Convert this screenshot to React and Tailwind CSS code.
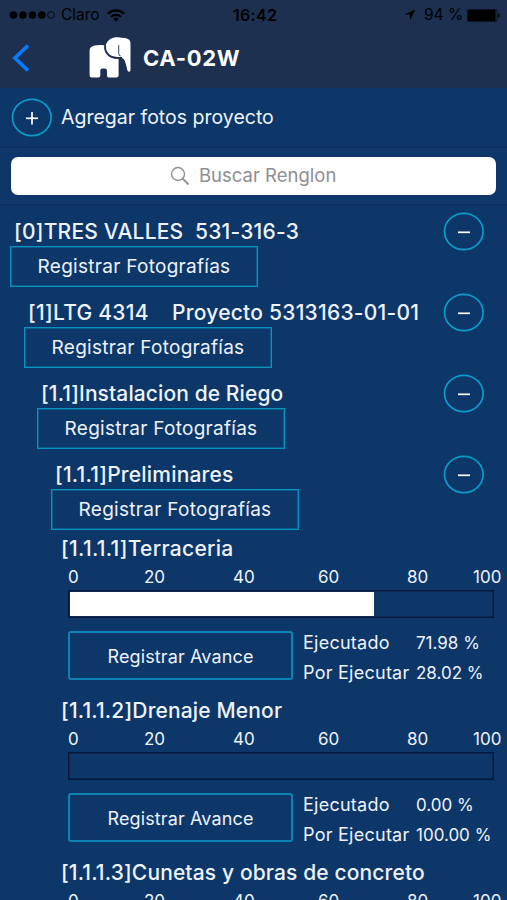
const sections = [
  { title: "[0]TRES VALLES  531-316-3", indent: "pl-[10px]", track: "tracking-[0.21px]" },
  { title: "[1]LTG 4314    Proyecto 5313163-01-01", indent: "pl-[24px]", track: "tracking-[0.24px]" },
  { title: "[1.1]Instalacion de Riego", indent: "pl-[37px]", track: "tracking-[0.1px]" },
  { title: "[1.1.1]Preliminares", indent: "pl-[51px]", track: "tracking-[0.2px]" },
];

const tasks = [
  { title: "[1.1.1.1]Terraceria", done: 71.98, track: "tracking-[0.3px]" },
  { title: "[1.1.1.2]Drenaje Menor", done: 0, track: "tracking-[0.15px]" },
  { title: "[1.1.1.3]Cunetas y obras de concreto", done: 0, track: "tracking-[0.13px]" },
];

const ticks = [
  { label: "0", width: "w-[76px]" },
  { label: "20", width: "w-[89px]" },
  { label: "40", width: "w-[85px]" },
  { label: "60", width: "w-[89px]" },
  { label: "80", width: "w-[66px]" },
  { label: "100", width: "w-[34px]" },
];

function StatusBar() {
  return (
    <div className="flex h-[30px] items-center pl-[9px] pr-[6px] text-black">
      <div className="flex w-[224px] items-center">
        <svg width="46" height="10" viewBox="0 0 46 10">
          <circle cx="4.5" cy="5" r="3.8" />
          <circle cx="14" cy="5" r="3.8" />
          <circle cx="23.5" cy="5" r="3.8" />
          <circle cx="32.8" cy="5" r="3.8" />
          <circle cx="42" cy="5" r="3.4" fill="none" stroke="black" strokeWidth="0.8" />
        </svg>
        <span className="ml-[6px] w-[40px] text-[15.5px] leading-none">Claro</span>
        <svg className="ml-[6px]" width="18" height="13" viewBox="0 0 18 13" fill="none" stroke="black" strokeWidth="2.2">
          <path d="M1 4.6a11.4 11.4 0 0 1 16 0" />
          <path d="M4 7.8a7.2 7.2 0 0 1 10 0" />
          <path d="M9 12.6L6.2 9.9a4 4 0 0 1 5.6 0z" fill="black" stroke="none" />
        </svg>
      </div>
      <span className="w-[46px] text-[16px] font-semibold leading-none tracking-[0.3px]">16:42</span>
      <div className="ml-auto flex items-center">
        <svg width="12" height="12" viewBox="0 0 12 12">
          <path d="M11.5 0.5L0.5 5.6h5.4v5.6z" />
        </svg>
        <span className="ml-[8px] w-[40px] whitespace-nowrap text-[15.5px] leading-none">94 %</span>
        <svg className="ml-[3px]" width="34" height="13" viewBox="0 0 34 13">
          <rect x="0.5" y="0.5" width="29.5" height="12" rx="1.5" fill="none" stroke="black" strokeOpacity="0.6" />
          <rect x="1" y="1" width="27.5" height="11" rx="0.5" />
          <path d="M31.2 4c2 .8 2 4.2 0 5z" />
        </svg>
      </div>
    </div>
  );
}

function ElephantLogo() {
  return (
    <svg width="44" height="44" viewBox="0 0 44 44" fill="white">
      <path d="M16.5 9.4C10 8.5 5.500 9.500 3 11.200Q1.600 12.200 1.600 14.500V39.300Q1.600 41.600 3.800 41.600H10.300Q12.300 41.600 12.300 39.600V34.500Q12.300 32.400 14.500 32.400H16.800Q19 32.400 19 34.500V39.600Q19 41.600 21 41.600H28.500Q30.600 41.600 30.600 39.500V21.500C25 24 15.500 19.500 16.500 9.400Z" />
      <path d="M17.800 9C19.500 3 25.500.8 30 1.200L38 2.300Q42.500 3.200 42.500 7.500V34Q42.500 35.800 41 35.700Q39.700 35.500 39.300 34C37.500 26 36.700 22.500 33 21.600C26 23.500 16 18 17.800 9Z" />
      <path d="M17.300 9.500C16 17 22.500 22.800 31 21.900H34" fill="none" stroke="#1d3050" strokeWidth="1.800" />
      <path d="M30.700 9v8.500q0 2.500 2 2.500" fill="none" stroke="#1d3050" strokeWidth="0.9" />
    </svg>
  );
}

function Header() {
  return (
    <header className="h-[88px] bg-[#1d3050]">
      <StatusBar />
      <div className="flex h-[57px] items-center pl-[11px]">
        <svg className="mb-[2px]" width="20" height="30" viewBox="0 0 20 30" fill="none">
          <path d="M17 2.5L4 15l13 12.5" stroke="#087cf8" strokeWidth="3.8" />
        </svg>
        <div className="mb-[2px] ml-[57px]">
          <ElephantLogo />
        </div>
        <h1 className="mb-[1px] ml-[11px] text-[22px] font-bold leading-none tracking-[0.7px] text-white">CA-02W</h1>
      </div>
    </header>
  );
}

function RoundButton({ minus }) {
  return (
    <button className="h-[39px] w-[41px] shrink-0">
      <svg width="41" height="39" viewBox="0 0 41 39" fill="none">
        <ellipse cx="20.8" cy="19.5" rx="19.3" ry="18.2" stroke="#0b9cc7" strokeWidth="1.7" />
        <path d="M15 20.3h12" stroke="white" strokeWidth="1.7" />
        {!minus && <path d="M21 14v12.5" stroke="white" strokeWidth="1.7" />}
      </svg>
    </button>
  );
}

function Section({ title, indent, track }) {
  return (
    <section className={`h-[81px] ${indent}`}>
      <div className="flex h-[40px] items-start justify-between pr-[23px]">
        <h2 className={`whitespace-pre pl-[4px] pt-[11px] text-[21px] font-medium leading-[30px] ${track}`}>{title}</h2>
        <div className="pt-[6px]">
          <RoundButton minus />
        </div>
      </div>
      <button className="flex h-[41px] w-[248px] items-center justify-center border border-[#0b93bf] pt-[2px] text-[19px] tracking-[0.28px] shadow-[inset_0_0_0_1px_#0b93bf66]">
        Registrar Fotografías
      </button>
    </section>
  );
}

function Task({ title, done, track }) {
  return (
    <section className="h-[162px] pl-[68px]">
      <h2 className={`-ml-[7px] whitespace-pre pt-[4px] text-[21px] font-medium leading-[30px] ${track}`}>{title}</h2>
      <div className="flex h-[26px] items-center pt-[1px] text-[17px]">
        {ticks.map((t) => (
          <span key={t.label} className={`shrink-0 ${t.width}`}>{t.label}</span>
        ))}
      </div>
      <div className="relative h-[28px] w-[426px] border border-[#06183a] p-px shadow-[inset_0_0_0_1px_#06183a80]">
        <div className="h-full bg-white" style={{ width: `${done}%` }} />
      </div>
      <div className="mt-[13px] flex">
        <button className="h-[49px] w-[225px] rounded-[3px] border-2 border-[#0b84b3] pt-[2px] text-[18px] tracking-[0.12px]">
          Registrar Avance
        </button>
        <div className="-mt-[4px] ml-[10px] grid grid-cols-[113px_1fr] whitespace-nowrap pt-px text-[18px] leading-[30px]">
          <span className="tracking-[0.25px]">Ejecutado</span>
          <span className="text-[17px]">{done.toFixed(2)} %</span>
          <span className="tracking-[0.25px]">Por Ejecutar</span>
          <span className="text-[17px]">{(100 - done).toFixed(2)} %</span>
        </div>
      </div>
    </section>
  );
}

export default function App() {
  return (
    <div className="h-[900px] w-[507px] overflow-hidden bg-[#0d3769] font-['Inter',sans-serif] text-[#eef2fb]">
      <Header />
      <div className="flex h-[60px] items-center border-b-2 border-[#0b3060] pl-[11px]">
        <RoundButton />
        <span className="ml-[9px] pt-px text-[19.5px]">Agregar fotos proyecto</span>
      </div>
      <div className="h-[58px] border-b-2 border-[#0b3060] px-[11px] pt-[9px]">
        <div className="flex h-[38px] items-center rounded-[7px] bg-white pl-[159px] text-[18.5px] text-[#8e8e93]">
          <svg width="20" height="20" viewBox="0 0 20 20" fill="none" stroke="#8e8e93">
            <circle cx="8" cy="8" r="6.5" strokeWidth="1.4" />
            <path d="M12.7 12.7l5.8 5.8" strokeWidth="1.9" />
          </svg>
          <span className="ml-[9px]">Buscar Renglon</span>
        </div>
      </div>
      {sections.map((s) => (
        <Section key={s.title} {...s} />
      ))}
      {tasks.map((t) => (
        <Task key={t.title} {...t} />
      ))}
    </div>
  );
}
